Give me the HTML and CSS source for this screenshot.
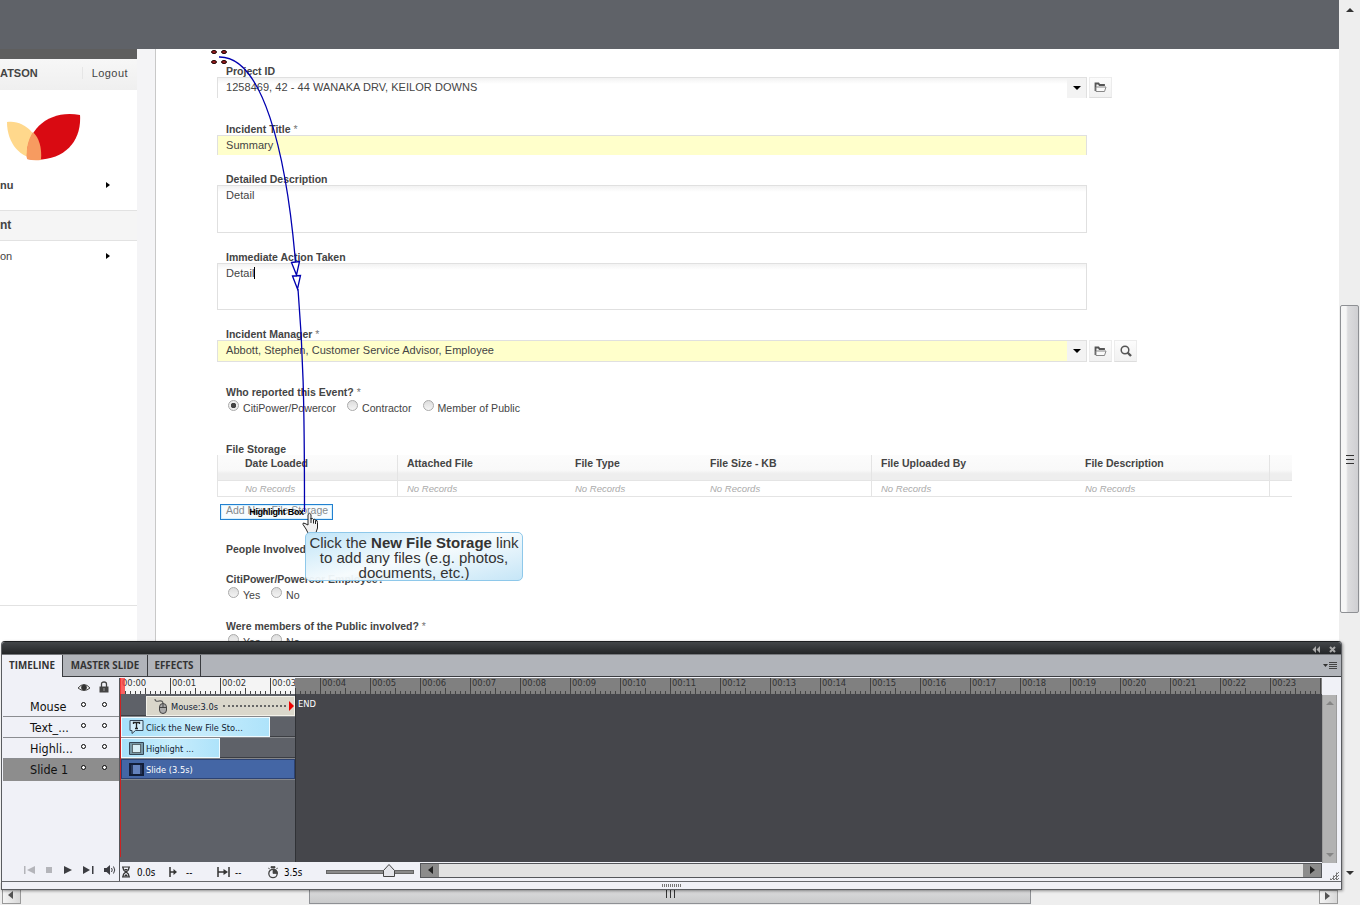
FILE: index.html
```html
<!DOCTYPE html>
<html lang="en">
<head>
    <meta charset="UTF-8">
    <meta name="viewport" content="width=device-width, initial-scale=1.0">
    <title>Slide Editor</title>
    <link rel="stylesheet" href="styles.css">
</head>
<body>
    <svg class="defs" width="0" height="0">
        <symbol id="folder" viewBox="0 0 13 11">
            <path d="M1.500 9V1.500h3l1 1.500H10v1" fill="none" stroke="#555" stroke-width="1.800"/>
            <path d="M2 9.500V5h10l-1.500 4.500z" fill="#fafafa" stroke="#888"/>
        </symbol>
    </svg>

    <div class="workspace">
        <div class="stage">
            <div class="stage-top"></div>
            <div class="slide">
                <!-- Left menu -->
                <div class="sidebar">
                    <div class="dark-strip"></div>
                    <div class="user-bar"><b>ATSON</b><span class="logout">Logout</span></div>
                    <div class="logo">
                        <svg width="76" height="50" viewBox="0 0 76 50">
                            <path d="M1 10C17 7 36 23 35 47C15 48 1 32 1 10Z" fill="#ffd88c"/>
                            <path d="M74 3C76 30 57 52 21 47C19 18 43-3 74 3Z" fill="#d90a12"/>
                            <path d="M27 20C33 26 36 35 35 48Q27 49 21 47C20 36 22 28 27 20Z" fill="#f79b60"/>
                        </svg>
                    </div>
                    <div class="menu-row first"><b>nu</b><i class="arrow"></i></div>
                    <div class="menu-head">nt</div>
                    <div class="menu-row"><span>on</span><i class="arrow"></i></div>
                    <div class="menu-rest"></div>
                </div>
                <div class="gutter"></div>

                <!-- Incident form -->
                <div class="form">
                    <label class="l1">Project ID</label>
                    <div class="field-row">
                        <div class="input combo h21"><span>1258469, 42 - 44 WANAKA DRV, KEILOR DOWNS</span><i class="drop"></i></div>
                        <span class="icon-btn"><svg width="13" height="11"><use href="#folder"/></svg></span>
                    </div>

                    <label class="l2">Incident Title <em>*</em></label>
                    <div class="input yellow h20">Summary</div>

                    <label class="l3">Detailed Description</label>
                    <div class="input area h48">Detail</div>

                    <label class="l4">Immediate Action Taken</label>
                    <div class="input area h47">Detail<i class="caret"></i></div>

                    <label class="l5">Incident Manager <em>*</em></label>
                    <div class="field-row">
                        <div class="input combo yellow h22"><span>Abbott, Stephen, Customer Service Advisor, Employee</span><i class="drop"></i></div>
                        <span class="icon-btn"><svg width="13" height="11"><use href="#folder"/></svg></span>
                        <span class="icon-btn"><svg width="12" height="12" viewBox="0 0 12 12"><circle cx="5" cy="5" r="3.8" fill="none" stroke="#555" stroke-width="1.5"/><path d="M7.5 7.5L11 11" stroke="#555" stroke-width="2.4"/></svg></span>
                    </div>

                    <label class="l6">Who reported this Event? <em>*</em></label>
                    <div class="radios">
                        <i class="radio on"></i><span class="r-a">CitiPower/Powercor</span>
                        <i class="radio"></i><span class="r-b">Contractor</span>
                        <i class="radio"></i><span class="r-c">Member of Public</span>
                    </div>

                    <label class="l7">File Storage</label>
                    <div class="files">
                        <div class="files-row files-head"><span>Date Loaded</span><span class="line">Attached File</span><span>File Type</span><span>File Size - KB</span><span class="line">File Uploaded By</span><span>File Description</span><span class="line"></span></div>
                        <div class="files-row"><span>No Records</span><span class="line">No Records</span><span>No Records</span><span>No Records</span><span class="line">No Records</span><span>No Records</span><span class="line"></span></div>
                    </div>
                    <div class="add-link">Add New File Storage</div>

                    <label class="l8">People Involved</label>
                    <label class="l9">CitiPower/Powercor Employee?</label>
                    <div class="radios yesno"><i class="radio"></i><span class="r-y">Yes</span><i class="radio"></i><span>No</span></div>
                    <label class="l10">Were members of the Public involved? <em>*</em></label>
                    <div class="radios yesno"><i class="radio"></i><span class="r-y">Yes</span><i class="radio"></i><span>No</span></div>
                </div>
            </div>
        </div>

        <div class="vscroll">
            <i class="tri up"></i>
            <div class="vthumb"><i></i><i></i><i></i></div>
            <i class="tri down"></i>
        </div>
        <div class="hscroll">
            <span class="hbtn"><i class="tri left"></i></span>
            <div class="hthumb"><i></i><i></i><i></i></div>
            <span class="hbtn end"><i class="tri right"></i></span>
        </div>

        <!-- Slide objects -->
        <div class="highlight-box">Highlight Box</div>
        <svg class="mouse-path" width="140" height="500" viewBox="200 40 140 500">
            <g fill="#a02020" stroke="#1a0000"><ellipse cx="214" cy="52" rx="2.5" ry="1.5"/><ellipse cx="224" cy="52" rx="2.5" ry="1.5"/><ellipse cx="214" cy="62" rx="2.5" ry="1.5"/><ellipse cx="224" cy="62" rx="2.5" ry="1.5"/></g>
            <path d="M219 57C262 56 286 150 295.500 262M298 289C303 350 304.500 400 304.500 512" fill="none" stroke="#0000b0" stroke-width="1.3"/>
            <path d="M291.500 262.500L299.500 261.500L296.500 275ZM292.500 276L300.500 275.500L297.500 289Z" fill="#fff" stroke="#0000b0" stroke-width="1.3"/>
            <path d="M308 525V514.500q1.500-2.500 3 0V519q1.500-1.500 2.500.5 1.500-1 2 .8 2-.5 2 2.200V528l-2 6h-7l-2.500-5-3-4.500q-.5-2.500 2-1z" fill="#f2f2f2" stroke="#222"/>
            <path d="M311 518v5M313.500 519.500v4M315.500 520.500v3.500" stroke="#222"/>
        </svg>
        <div class="caption">Click the <b>New File Storage</b> link<br>to add any files (e.g. photos,<br>documents, etc.)</div>

        <!-- Timeline panel -->
        <div class="panel">
            <div class="titlebar">
                <svg width="8" height="7" viewBox="0 0 8 7"><path d="M4 0v7L.5 3.500zM8 0v7L4.500 3.500z" fill="#aaa"/></svg>
                <svg width="7" height="7" viewBox="0 0 7 7"><path d="M1 1l5 5M6 1l-5 5" stroke="#aaa" stroke-width="2"/></svg>
            </div>
            <div class="tabs">
                <span class="tab active">TIMELINE</span><span class="tab t-master">MASTER SLIDE</span><span class="tab t-fx">EFFECTS</span>
                <svg class="menu-icon" width="14" height="8" viewBox="0 0 14 8"><path d="M0 2h5L2.500 5z" fill="#333"/><path d="M6 .5h8M6 2.500h8M6 4.500h8M6 6.500h8" stroke="#444"/></svg>
            </div>
            <div class="panel-body">
                <div class="names">
                    <div class="names-head">
                        <svg width="12" height="9" viewBox="0 0 12 9"><path d="M0 5Q6-2 12 5Q6 10 0 5Z" fill="#eee" stroke="#444"/><circle cx="6" cy="4.500" r="2.800" fill="#333"/></svg>
                        <svg width="10" height="12" viewBox="0 0 10 12"><path d="M2.500 6V3q0-2 2.500-2t2.500 2v3" fill="none" stroke="#444" stroke-width="1.300"/><path d="M.5 5.500h9v6h-9z" fill="#444"/><path d="M5 7v3" stroke="#999"/></svg>
                    </div>
                    <div class="name">Mouse<i></i><i></i></div>
                    <div class="name">Text_...<i></i><i></i></div>
                    <div class="name">Highli...<i></i><i></i></div>
                    <div class="name selected">Slide 1<i></i><i></i></div>
                    <div class="player">
                        <svg width="94" height="12" viewBox="0 0 94 12">
                            <g fill="#b4b5ba"><path d="M1 2h1.500v8H1zM12 2v8L4 6zM23 3h6v6h-6z"/></g>
                            <g fill="#3c3d42"><path d="M41 2v8l8-4zM60 2v8l7-4zM69 2h1.500v8H69zM81 4h2.500L87 1v10l-3.500-3H81z"/></g>
                            <path d="M88.500 4q1.500 2 0 4M90.500 2.500q2.500 3.500 0 7" fill="none" stroke="#3c3d42"/>
                        </svg>
                    </div>
                </div>
                <div class="tracks">
                    <div class="ruler"><span>00:00</span><span>00:01</span><span>00:02</span><span class="cut">00:03</span><span>00:04</span><span>00:05</span><span>00:06</span><span>00:07</span><span>00:08</span><span>00:09</span><span>00:10</span><span>00:11</span><span>00:12</span><span>00:13</span><span>00:14</span><span>00:15</span><span>00:16</span><span>00:17</span><span>00:18</span><span>00:19</span><span>00:20</span><span>00:21</span><span>00:22</span><span>00:23</span></div>
                    <div class="lanes">
                        <div class="lane"><div class="bar mouse">
                            <svg width="16" height="16" viewBox="0 0 16 16"><path d="M2 1q0 3 4 2t4 3" fill="none" stroke="#555" stroke-width="1.200"/><rect x="6.500" y="5.500" width="7" height="10" rx="3.500" fill="#aaa" stroke="#444"/><path d="M7 9.500h6M10 6v4" stroke="#444"/></svg>
                            <span>Mouse:3.0s</span><i class="dots"></i><i class="stop"></i></div><span class="end">END</span></div>
                        <div class="lane"><div class="bar text">
                            <svg width="15" height="14" viewBox="0 0 15 14"><path d="M1 .5h13v10H6.500L3 13.500v-3H1z" fill="#d4eefa" stroke="#345"/><path d="M4.500 4V2.500h6V4M7.500 2.500v6M6 8.500h3" fill="none" stroke="#222" stroke-width="1.300"/></svg>
                            <span>Click the New File Sto...</span></div></div>
                        <div class="lane"><div class="bar light">
                            <svg width="15" height="13" viewBox="0 0 15 13"><path d="M.5.5h14v12H.5z" fill="#7898a6" stroke="#345"/><path d="M3.500 2.500h8v8h-8z" fill="#d8eef6"/><path d="M3.500 2.500h8v8h-8z" fill="none" stroke="#111" stroke-dasharray="1 1"/></svg>
                            <span>Highlight ...</span></div></div>
                        <div class="lane last"><div class="bar slide-bar">
                            <svg width="15" height="13" viewBox="0 0 15 13"><path d="M1 1h13v11H1z" fill="#6482bd" stroke="#121e38" stroke-width="2"/><path d="M3 2v9M12 2v9" stroke="#121e38" stroke-width="1.500"/></svg>
                            <span>Slide (3.5s)</span></div></div>
                    </div>
                    <div class="status">
                        <svg width="10" height="12" viewBox="0 0 10 12"><path d="M1 1h8M1 11h8M2 1.500q0 3 3 4.500q-3 1.500-3 4.500M8 1.500q0 3-3 4.500q3 1.500 3 4.500" fill="none" stroke="#333" stroke-width="1.200"/><path d="M3 3h4L5 5zM5 8l2.500 2.500h-5z" fill="#333"/></svg>
                        <span class="s1">0.0s</span>
                        <svg width="9" height="10" viewBox="0 0 9 10"><path d="M1 0v10M1 5h4" stroke="#333" stroke-width="1.500"/><path d="M4.500 2v6L8 5z" fill="#333"/></svg>
                        <span class="s2">--</span>
                        <svg width="13" height="10" viewBox="0 0 13 10"><path d="M1 0v10M12 0v10M1 5h6" stroke="#333" stroke-width="1.500"/><path d="M6.500 2v6L11 5z" fill="#333"/></svg>
                        <span class="s3">--</span>
                        <svg width="12" height="13" viewBox="0 0 12 13"><circle cx="6" cy="7.500" r="4.200" fill="none" stroke="#444" stroke-width="1.300"/><path d="M6 3v4.500h4.500A4.500 4.500 0 0 0 6 3zM4 .5h4v1.500H4zM1 2l2 1M11 2l-2 1" fill="#444" stroke="#444" stroke-width=".7"/></svg>
                        <span class="s4">3.5s</span>
                        <div class="zoom-line"><svg width="12" height="13" viewBox="0 0 12 13"><path d="M.5 12.500v-6l5.500-6 5.500 6v6z" fill="#e4e5ea" stroke="#444"/></svg></div>
                        <div class="tscroll"><span><i class="tri left"></i></span><span><i class="tri right"></i></span></div>
                    </div>
                    <div class="playhead"></div>
                </div>
                <div class="side"><div class="side-scroll"><i class="tri up"></i><i class="tri down"></i></div><div class="corner"></div></div>
            </div>
            <div class="panel-foot"><i></i></div>
        </div>
    </div>
</body>
</html>
```
FILE: styles.css
```css
* {
    box-sizing: border-box;
}

body {
    margin: 0;
    overflow: hidden;
    font-family: "Liberation Sans", Arial, sans-serif;
    font-size: 11px;
    color: #444;
}

.defs {
    position: absolute;
}

svg {
    display: block;
    flex: none;
}

.workspace {
    position: relative;
    width: 1360px;
    height: 905px;
    display: grid;
    grid-template-columns: 1340px 20px;
    grid-template-rows: 883px 22px;
    background: #eee;
    overflow: hidden;
}

.stage {
    overflow: hidden;
    width: 1339px;
    background: #fff;
}

.stage-top {
    height: 49px;
    background: #5f6268;
}

.slide {
    display: flex;
    height: 834px;
}

/* Sidebar */
.sidebar {
    flex: none;
    width: 137px;
    display: flex;
    flex-direction: column;
}

.dark-strip {
    height: 10px;
    background: #5e5e5e;
}

.user-bar {
    height: 31px;
    display: flex;
    justify-content: space-between;
    align-items: center;
    padding-bottom: 3px;
    background: linear-gradient(#f7f7f7, #efefef);
}

.logout {
    border-left: 1px solid #e6e6e6;
    padding: 0 9px;
    font-size: 11px;
    letter-spacing: .45px;
}

.logo {
    height: 82px;
    padding: 22px 0 0 6px;
}

.menu-row {
    display: flex;
    justify-content: space-between;
    height: 32px;
    padding: 9px 27px 0 0;
}

.menu-row.first {
    height: 38px;
    padding-top: 7px;
}

.menu-head {
    height: 31px;
    border: solid #e2e2e2;
    border-width: 1px 0;
    background: #f5f5f5;
    font-size: 12px;
    font-weight: bold;
    line-height: 29px;
}

.menu-rest {
    height: 333px;
    border-bottom: 1px solid #e2e2e2;
}

.arrow {
    height: 0;
    margin-top: 3px;
    border: solid transparent;
    border-width: 3.5px 0 3.5px 4px;
    border-left-color: #000;
}

.gutter {
    flex: none;
    width: 19px;
    background: #f4f4f6;
    border-right: 1px solid #c8c8c8;
}

/* Form */
.form {
    flex: none;
    width: 1122px;
    margin-left: 61px;
    padding-top: 16px;
}

.form label {
    display: block;
    height: 12px;
    padding-left: 9px;
    font-size: 10.5px;
    font-weight: bold;
    line-height: 12px;
    white-space: nowrap;
}

.form em {
    font-weight: normal;
    font-style: normal;
    color: #777;
}

.field-row {
    display: flex;
    gap: 2px;
}

.input {
    width: 870px;
    padding-left: 8px;
    border: 1px solid #e0e0e0;
    border-bottom: 0;
    background: linear-gradient(#f2f2f2, #fff 6px);
    font-size: 11px;
    line-height: 19px;
    letter-spacing: .04px;
    white-space: nowrap;
}

.input.yellow {
    background: #ffffcb;
}

.input.area {
    border-bottom: 1px solid #e0e0e0;
}

.combo {
    display: flex;
    justify-content: space-between;
}

.h20 { height: 20px; }
.h21 { height: 21px; }
.h22 { height: 22px; }
.h47 { height: 47px; }
.h48 { height: 48px; }

.input.h22 {
    border-bottom: 1px solid #e0e0e0;
}

.drop {
    width: 19px;
    background: #f3f3f3;
    padding: 8px 0 0 6px;
}

.drop::before {
    content: "";
    display: block;
    width: 0;
    border: solid transparent;
    border-width: 4px 4px 0;
    border-top-color: #000;
}

.icon-btn {
    width: 23px;
    display: flex;
    align-items: center;
    justify-content: center;
    border: 1px solid #ececec;
    border-bottom-color: #ddd;
    background: linear-gradient(#fcfcfc, #f1f1f1);
}

.caret {
    display: inline-block;
    width: 1px;
    height: 12px;
    background: #000;
    vertical-align: -2px;
}

.l2 { margin-top: 25px; }
.l3 { margin-top: 18px; }
.l4 { margin-top: 18px; }
.l5 { margin-top: 18px; }
.l6 { margin-top: 24px; }
.l7 { margin-top: 28px; }
.l8 { margin-top: 26px; }
.l9 { margin-top: 18px; }
.l10 { margin-top: 18px; }

.radios {
    display: flex;
    height: 16px;
    margin-top: 1px;
    padding-left: 11px;
    font-size: 10.6px;
    line-height: 19px;
}

.radio {
    width: 11px;
    height: 11px;
    margin: 1px 4px 0 0;
    border: 1px solid #aaa;
    border-radius: 50%;
    background: linear-gradient(#ddd, #f4f4f4);
}

.radio.on {
    background: radial-gradient(circle, #444 2.5px, #eee 3px);
}

.r-a { width: 104px; }
.r-b { width: 60.5px; }
.r-y { width: 28px; }

.files {
    width: 1075px;
    border-left: 1px solid #e4e4e4;
}

.files-row {
    display: grid;
    grid-template-columns: 179px 169px 135px 170px 205px 193px 1fr;
    height: 16px;
    border-bottom: 1px solid #e4e4e4;
    font-size: 9.5px;
    font-style: italic;
    line-height: 15px;
    color: #aaa;
}

.files-row span {
    padding-left: 9px;
}

.files-row span:first-child {
    padding-left: 27px;
}

.files-row .line {
    border-left: 1px solid #e4e4e4;
}

.files-head {
    height: 26px;
    background: linear-gradient(#fcfcfc, #f9f9f9 60%, #eee 75%, #eee);
    color: #444;
    font-size: 10.5px;
    font-weight: bold;
    font-style: normal;
    line-height: 17px;
}

.add-link {
    height: 14px;
    margin-top: 6px;
    padding-left: 9px;
    font-size: 10.5px;
    line-height: 14px;
    color: #666;
}

/* Window scrollbars */
.tri {
    width: 0;
    height: 0;
    border: 4px solid transparent;
}

.tri.up { border-top: 0; border-bottom-color: #333; }
.tri.down { border-bottom: 0; border-top-color: #333; }
.tri.left { border-left: 0; border-right: 5px solid #222; }
.tri.right { border-right: 0; border-left: 5px solid #222; }

.vscroll {
    display: flex;
    flex-direction: column;
    align-items: center;
    padding: 8px 1px 8px 0;
    background: #eee;
}

.vthumb {
    width: 19px;
    height: 308px;
    margin: 293px 0 258px;
    display: flex;
    flex-direction: column;
    align-items: center;
    justify-content: center;
    gap: 3px;
    border: 1px solid #8e9094;
    border-radius: 2px;
    background: linear-gradient(90deg, #f6f6f6 30%, #dcdcde 40%, #cfcfd2);
}

.vthumb i {
    width: 8px;
    height: 1px;
    background: #333;
}

.hscroll {
    grid-column: 1 / 3;
    display: flex;
    background: #eee;
    padding: 5px 22px 1px 2px;
}

.hbtn {
    width: 19px;
    display: flex;
    align-items: center;
    justify-content: center;
    padding-right: 3px;
    border: 1px solid #999;
    background: linear-gradient(90deg, #f4f4f4, #d8d8d8);
}

.hbtn.end {
    margin-left: auto;
}

.hbtn .tri {
    margin-top: -3px;
    opacity: .75;
}

.hthumb {
    width: 722px;
    margin-left: 288px;
    display: flex;
    justify-content: center;
    gap: 3px;
    border: 1px solid #8e9094;
    background: linear-gradient(#dcdcdd, #c9cacb);
}

.hthumb i {
    width: 1px;
    height: 9px;
    background: #333;
}

/* Slide objects placed over the form */
.highlight-box {
    position: absolute;
    left: 220px;
    top: 504px;
    width: 113px;
    height: 16px;
    border: 1px solid #2180d0;
    background: rgba(225, 245, 255, .25);
    box-shadow: inset 0 0 0 1px rgba(190, 230, 250, .6);
    color: #000;
    font: bold 9px/14px "Liberation Sans", sans-serif;
    text-align: center;
    letter-spacing: -.3px;
}

.caption {
    position: absolute;
    left: 305px;
    top: 532px;
    width: 218px;
    height: 49px;
    padding-top: 2px;
    overflow: hidden;
    border: 1px solid #8ec8ea;
    border-radius: 5px;
    background: linear-gradient(165deg, rgba(190, 228, 248, .97), rgba(246, 251, 253, .95) 50%, rgba(196, 229, 247, .97));
    font-size: 15px;
    line-height: 15px;
    text-align: center;
    white-space: nowrap;
    color: #333;
}

.mouse-path {
    position: absolute;
    left: 200px;
    top: 40px;
}

/* Timeline panel */
.panel {
    position: absolute;
    left: 1px;
    top: 641px;
    width: 1341px;
    height: 249px;
    border: 1px solid #5a5c60;
    border-top-color: #1d1f21;
    border-radius: 4px 4px 0 0;
    background: #f0f1f7;
    box-shadow: 1px 1px 3px rgba(0, 0, 0, .4);
    overflow: hidden;
    font-family: "DejaVu Sans Condensed", "DejaVu Sans", sans-serif;
    font-stretch: condensed;
    color: #222;
}

.titlebar {
    height: 12px;
    display: flex;
    justify-content: flex-end;
    align-items: center;
    gap: 9px;
    padding: 2px 5px 0 0;
    background: linear-gradient(#434649, #232527);
}

.tabs {
    height: 23px;
    display: flex;
    border-top: 1px solid #77797d;
    border-bottom: 1px solid #3a3c40;
    background: #b1b4ba;
    font: bold 9.8px/21px "Open Sans", sans-serif;
    color: #333;
}

.tab {
    width: 85px;
    border-right: 1px solid #3a3c40;
    text-align: center;
    white-space: nowrap;
}

.tab.active {
    width: 61px;
    height: 22px;
    background: #f0f1f7;
}

.tab.t-fx {
    width: 53px;
}

.menu-icon {
    margin: 7px 4px 0 auto;
}

.panel-body {
    display: flex;
    height: 205px;
    padding-top: 1px;
    border-bottom: 1px solid #66686c;
}

.names {
    width: 118px;
    display: flex;
    flex-direction: column;
    border-right: 1px solid #55575b;
}

.names-head {
    height: 18px;
    display: flex;
    align-items: center;
    gap: 9px;
    padding-left: 76px;
}

.name {
    display: flex;
    height: 21px;
    margin-left: 1px;
    padding-left: 27px;
    border-bottom: 1px solid #8b8d91;
    font-size: 12.5px;
    line-height: 21px;
    color: #111;
}

.name i {
    width: 5px;
    height: 5px;
    margin-top: 6px;
    border: 1px solid #000;
    border-radius: 50%;
    background: #fff;
}

.name i:first-of-type {
    margin-left: auto;
}

.name i:last-child {
    margin: 6px 12px 0 16px;
}

.name.selected {
    height: 22px;
    background: #8d8d8d;
    border-bottom: 0;
}

.player {
    margin: auto 0 5px 21px;
}

.tracks {
    position: relative;
    width: 1202px;
    display: flex;
    flex-direction: column;
}

.ruler {
    height: 16px;
    display: flex;
    background:
        repeating-linear-gradient(90deg, #444 0 1px, transparent 1px 50px),
        repeating-linear-gradient(90deg, #444 0 1px, transparent 1px 25px) 0 100% / 100% 6px no-repeat,
        repeating-linear-gradient(90deg, #444 0 1px, transparent 1px 5px) 0 100% / 100% 3px no-repeat,
        linear-gradient(90deg, #f4f4f4 175px, #808080 175px);
    font-size: 9.3px;
    line-height: 10px;
    color: #333;
}

.ruler span {
    width: 50px;
    flex: none;
    padding-left: 2px;
    white-space: nowrap;
}

.ruler .cut {
    width: 25px;
    margin-right: 25px;
    overflow: hidden;
}

.lanes {
    height: 168px;
    padding-top: 2px;
    background: linear-gradient(90deg, #5e6168 175px, #303236 175px, #303236 176px, #45464b 176px);
}

.lane {
    display: flex;
    height: 21px;
    background: linear-gradient(#3c3e43, #3c3e43) 0 19px / 175px 1px no-repeat, linear-gradient(#85878b, #85878b) 0 20px / 175px 1px no-repeat;
}

.bar {
    height: 20px;
    display: flex;
    align-items: center;
    gap: 2px;
    margin-left: 1px;
    padding-left: 7px;
    border: 1px solid #eefaff;
    background: linear-gradient(90deg, #a6e0fa, #c8edfc 50%, #aee3fa);
    font-size: 9.2px;
    white-space: nowrap;
    color: #123;
}

.bar.text { width: 149px; }
.bar.light { width: 99px; }

.bar.mouse {
    width: 149px;
    margin-left: 26px;
    padding-left: 6px;
    background: #dad7cb;
    border-color: #f4f2ea;
}

.dots {
    width: 63px;
    margin-left: 3px;
    border-top: 2px dotted #666;
}

.stop {
    margin-left: auto;
    border: solid transparent;
    border-width: 5px 0 5px 5px;
    border-left-color: #e00;
}

.end {
    margin: 2px 0 0 3px;
    font-size: 9.3px;
    color: #fff;
}

.bar.slide-bar {
    width: 174px;
    border-color: #2c4272;
    background: #4466a5;
    color: #fff;
}

.status {
    height: 19px;
    display: flex;
    align-items: center;
    padding: 1px 0 0 1px;
    font-size: 9.7px;
    color: #000;
}

.s1 { width: 32px; padding-left: 6px; margin-right: 6px; }
.s2 { width: 39px; padding-left: 8px; }
.s3 { width: 37px; padding-left: 5px; }
.s4 { width: 47px; padding-left: 5px; }

.zoom-line {
    width: 88px;
    height: 4px;
    display: flex;
    align-items: center;
    padding-left: 56px;
    border: 1px solid #666;
    background: #8a8a8a;
}

.zoom-line svg {
    margin-top: -4px;
}

.tscroll {
    flex: 1;
    height: 15px;
    margin: -4px 0 0 6px;
    display: flex;
    justify-content: space-between;
    border: 1px solid #55575b;
    background: #e2e2e2;
}

.tscroll span {
    width: 18px;
    display: flex;
    align-items: center;
    justify-content: center;
    background: #8c8c8c;
}

.playhead {
    position: absolute;
    left: 0;
    top: 0;
    width: 1px;
    height: 179px;
    background: #c22;
}

.playhead::before {
    content: "";
    display: block;
    width: 5px;
    height: 16px;
    background: rgba(250, 60, 60, .8);
}

.side {
    width: 15px;
    padding-top: 17px;
}

.side-scroll {
    height: 168px;
    display: flex;
    flex-direction: column;
    align-items: center;
    justify-content: space-between;
    padding: 6px 0;
    background: #b2b2b2;
    border: solid #9c9c9c;
    border-width: 0 1px;
}

.side-scroll .up { border-bottom-color: #858585; }
.side-scroll .down { border-top-color: #858585; }

.corner {
    width: 10px;
    height: 10px;
    margin: 7px 0 0 7px;
    background: repeating-conic-gradient(#777 0 25%, transparent 0 50%) 0 0 / 3px 3px;
    clip-path: polygon(100% 0, 100% 100%, 0 100%);
}

.panel-foot i {
    display: block;
    width: 19px;
    height: 3px;
    margin: 2px auto 0;
    background: repeating-linear-gradient(90deg, #777 0 1px, transparent 1px 2px);
}
```
